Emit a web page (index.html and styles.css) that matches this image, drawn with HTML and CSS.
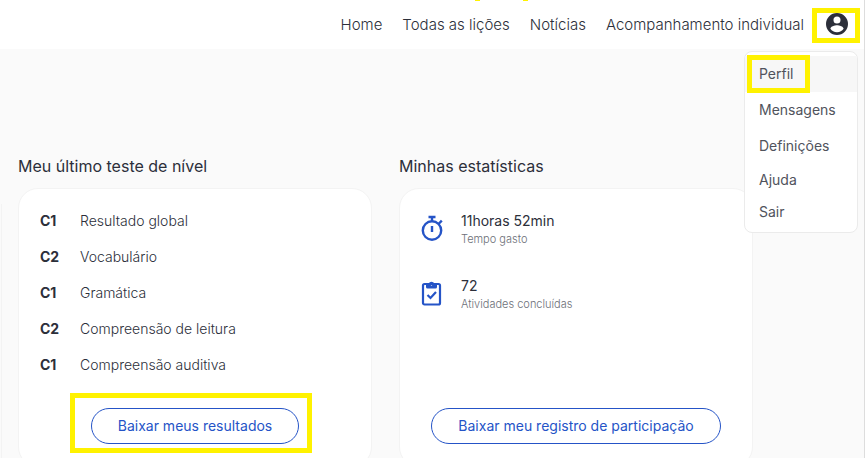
FILE: index.html
```
<!DOCTYPE html>
<html lang="pt">
<head>
    <meta charset="UTF-8">
    <meta name="viewport" content="width=device-width, initial-scale=1.0">
    <title>Minhas estatísticas</title>
    <link rel="stylesheet" href="styles.css">
</head>
<body>
    <!-- Top bar -->
    <header class="header">
        <nav class="nav">
            <a href="#">Home</a>
            <a href="#">Todas as lições</a>
            <a href="#">Notícias</a>
            <a href="#">Acompanhamento individual</a>
        </nav>
        <div class="account">
            <button class="avatar" type="button" aria-label="Conta">
                <svg viewBox="2 2 20 20" width="22" height="22">
                    <path fill="currentColor" fill-rule="evenodd" d="M12 2a10 10 0 1 0 0 20 10 10 0 0 0 0-20zm0 3.2a3.200 3.200 0 1 1 0 6.400 3.200 3.200 0 0 1 0-6.400zm0 14.200c-2.500 0-4.700-1.200-6-3.100.1-2 4-3.100 6-3.100s5.900 1.100 6 3.100a7.200 7.200 0 0 1-6 3.100z"/>
                </svg>
            </button>
            <!-- Account menu -->
            <ul class="menu">
                <li class="active"><a href="#">Perfil</a></li>
                <li><a href="#">Mensagens</a></li>
                <li><a href="#">Definições</a></li>
                <li class="short"><a href="#">Ajuda</a></li>
                <li class="short"><a href="#">Sair</a></li>
            </ul>
        </div>
        <span class="tick tick-left"></span>
        <span class="tick tick-right"></span>
    </header>

    <main class="content">
        <div class="prev-card"></div>

        <section class="panel">
            <h2>Meu último teste de nível</h2>
            <div class="card">
                <dl class="levels">
                    <dt>C1</dt><dd>Resultado global</dd>
                    <dt>C2</dt><dd>Vocabulário</dd>
                    <dt>C1</dt><dd>Gramática</dd>
                    <dt>C2</dt><dd>Compreensão de leitura</dd>
                    <dt>C1</dt><dd>Compreensão auditiva</dd>
                </dl>
                <button class="download marked" type="button">Baixar meus resultados</button>
            </div>
        </section>

        <section class="panel">
            <h2>Minhas estatísticas</h2>
            <div class="card">
                <div class="stat">
                    <svg class="icon" viewBox="0 0 24 28" width="24" height="28" fill="none" stroke="currentColor" stroke-width="2.400">
                        <circle cx="11" cy="15.500" r="9.200"/>
                        <path d="M7.500 2h7M11 2v4M11 11v6M17.500 9l3.300-3.300"/>
                    </svg>
                    <div>
                        <strong>11horas 52min</strong>
                        <small>Tempo gasto</small>
                    </div>
                </div>
                <div class="stat">
                    <svg class="icon" viewBox="0 0 24 28" width="24" height="28" fill="none" stroke="currentColor" stroke-width="2.200">
                        <rect x="2" y="4" width="17" height="20.500" rx="1.500"/>
                        <path fill="currentColor" stroke="none" fill-rule="evenodd" d="M5 3.500h2.600a3.200 3.200 0 0 1 5.800 0H16V7a1.500 1.500 0 0 1-1.500 1.500h-8A1.500 1.500 0 0 1 5 7zM10.500 3l-1.400 1.400 1.400 1.400 1.400-1.400z"/>
                        <path d="M6.500 15l3 3 5.500-6"/>
                    </svg>
                    <div>
                        <strong>72</strong>
                        <small>Atividades concluídas</small>
                    </div>
                </div>
                <button class="download" type="button">Baixar meu registro de participação</button>
            </div>
        </section>
    </main>
    <span class="edge-mark"></span>
</body>
</html>
```
FILE: styles.css
```
* {
    box-sizing: border-box;
}

body {
    margin: 0;
    min-height: 100vh;
    position: relative;
    overflow: hidden;
    border-right: 1px solid #dddddd;
    background-color: #fafafa;
    color: #2c2f3a;
    font-family: Inter, "Liberation Sans", sans-serif;
    font-size: 14px;
    line-height: 20px;
}

a {
    color: inherit;
    text-decoration: none;
}

button {
    font: inherit;
    cursor: pointer;
}

/* Header */
.header {
    position: relative;
    display: flex;
    align-items: center;
    justify-content: flex-end;
    height: 49px;
    padding-right: 4px;
    background-color: #ffffff;
}

.nav {
    display: flex;
    gap: 20px;
    font-size: 15px;
    font-weight: 300;
}

.account {
    position: relative;
    margin-left: 8px;
}

.avatar {
    display: flex;
    align-items: center;
    justify-content: center;
    width: 48px;
    height: 35px;
    margin-bottom: -2px;
    padding: 0 0 4px 2px;
    border: 5px solid #fff200;
    background: none;
    color: #2c2f3a;
}

.tick {
    position: absolute;
    top: 0;
    width: 5px;
    height: 1px;
    background-color: #fff200;
}

.tick-left {
    left: 55%;
}

.tick-right {
    left: 60.5%;
}

/* Account menu */
.menu {
    position: absolute;
    top: 43px;
    right: 2px;
    z-index: 2;
    width: 114px;
    margin: 0;
    padding: 4px 0;
    list-style: none;
    border: 1px solid #ebebeb;
    border-radius: 8px;
    background-color: #ffffff;
    color: #50535c;
}

.menu a {
    display: block;
    padding: 8px 14px;
}

.menu .short a {
    padding: 6px 14px;
}

.menu .active {
    position: relative;
    background-color: #f7f7f7;
}

.menu .active::after {
    content: "";
    position: absolute;
    inset: -1px 47px -1px 2px;
    border: 5px solid #fff200;
    pointer-events: none;
}

/* Cards */
.content {
    display: flex;
    gap: 27px;
    padding: 107px 111px 0 0;
}

.prev-card {
    width: 2px;
    margin: 48px -11px 0 0;
    border-right: 1px solid #f3f3f3;
}

.panel {
    flex: 1;
    display: flex;
    flex-direction: column;
}

h2 {
    margin: 0;
    font-size: 16px;
    font-weight: 400;
}

.card {
    flex: 1;
    display: flex;
    flex-direction: column;
    min-height: 279px;
    margin-top: 12px;
    padding: 22px 21px;
    border: 1px solid #f3f3f3;
    border-radius: 20px;
    background-color: #ffffff;
}

.levels {
    display: grid;
    grid-template-columns: 40px 1fr;
    row-gap: 16px;
    margin: 0;
}

.levels dt {
    font-weight: 700;
}

.levels dd {
    margin: 0;
    font-weight: 300;
}

.stat {
    display: flex;
    gap: 16px;
    margin-bottom: 27px;
}

.stat strong,
.stat small {
    display: block;
}

.stat strong {
    font-weight: 400;
}

.stat small {
    color: #6c6f78;
    font-size: 11px;
    font-weight: 300;
    line-height: 16px;
}

.stat + .stat {
    margin-top: 2px;
}

.icon {
    margin-top: 4px;
    color: #2554c7;
}

.download {
    position: relative;
    align-self: center;
    height: 36px;
    margin-top: auto;
    padding: 0 26px;
    border: 1px solid #2554c7;
    border-radius: 18px;
    background-color: #ffffff;
    color: #2554c7;
}

.marked::after {
    content: "";
    position: absolute;
    inset: -16px -14px -10px -22px;
    border: 5px solid #fff200;
    pointer-events: none;
}

.edge-mark {
    position: absolute;
    top: 228px;
    right: -1px;
    width: 1px;
    height: 5px;
    background-color: #555555;
}
```
